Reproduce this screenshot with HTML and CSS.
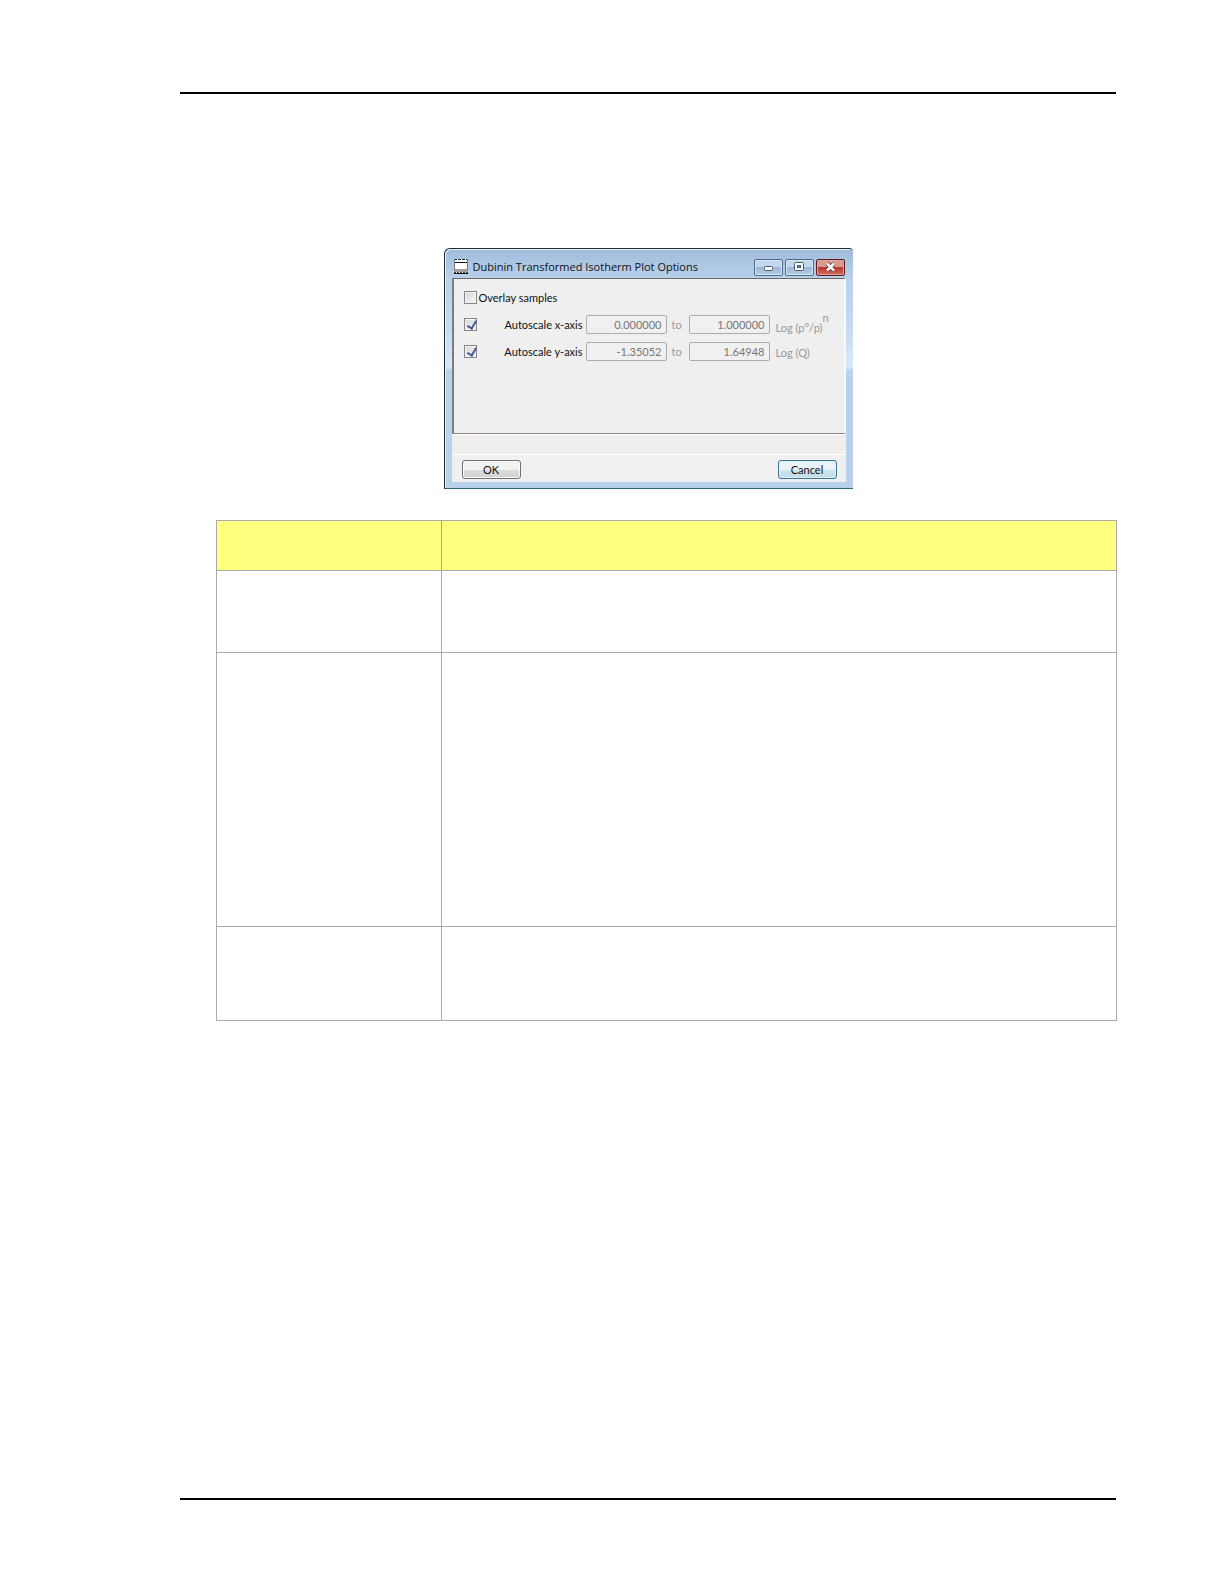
FILE: index.html
```html
<!DOCTYPE html>
<html lang="en">
<head>
    <meta charset="utf-8">
    <title>Dubinin Transformed Isotherm Plot Options</title>
    <link rel="stylesheet" href="styles.css">
</head>
<body>
    <hr class="rule">
    <main>
        <form class="dialog">
            <div class="titlebar">
                <svg class="app-icon" width="14" height="16" viewBox="0 0 14 16">
                    <rect x="0" y="0" width="14" height="15" fill="#fff"/>
                    <path d="M0 0.500h14" stroke="#222" stroke-dasharray="3 1"/>
                    <path d="M0 3.500h14" stroke="#16161e" stroke-width="1"/>
                    <path d="M0 10h14v3H0z" fill="#a39d98"/>
                    <path d="M0 13.500h14" stroke="#444" stroke-dasharray="2 1"/>
                    <path d="M0 14.500h14" stroke="#111"/>
                    <path d="M0.500 0v11M13.500 0v11" stroke="#777"/>
                </svg>
                <h1 class="title">Dubinin Transformed Isotherm Plot Options</h1>
                <button type="button" class="win-btn" aria-label="Minimize">
                    <svg width="11" height="10" viewBox="0 0 11 10"><rect x="1.500" y="4.500" width="8" height="4" rx="1" fill="#fff" stroke="#4d5566"/></svg>
                </button>
                <button type="button" class="win-btn" aria-label="Maximize">
                    <svg width="11" height="10" viewBox="0 0 11 10"><rect x="0.500" y="0.500" width="9" height="8" rx="1" fill="#fff" stroke="#4d5566"/><rect x="3.500" y="3.500" width="3" height="2" fill="#7b93b2" stroke="#4d5566"/></svg>
                </button>
                <button type="button" class="win-btn close" aria-label="Close">
                    <svg width="11" height="10" viewBox="0 0 11 10"><path d="M2 1.500L9 8.500M9 1.500L2 8.500" stroke="#5c3038" stroke-width="4"/><path d="M2 1.500L9 8.500M9 1.500L2 8.500" stroke="#fff" stroke-width="2.500"/></svg>
                </button>
            </div>
            <div class="client">
                <div class="panel">
                    <div class="row">
                        <input type="checkbox" id="overlay">
                        <label for="overlay">Overlay samples</label>
                    </div>
                    <div class="row">
                        <input type="checkbox" id="autoX" checked>
                        <label class="axis" for="autoX">Autoscale x-axis</label>
                        <input type="text" value="0.000000" aria-label="x-axis from" disabled>
                        <span class="to">to</span>
                        <input type="text" value="1.000000" aria-label="x-axis to" disabled>
                        <span class="unit">Log (p°/p)<sup>n</sup></span>
                    </div>
                    <div class="row">
                        <input type="checkbox" id="autoY" checked>
                        <label class="axis" for="autoY">Autoscale y-axis</label>
                        <input type="text" value="-1.35052" aria-label="y-axis from" disabled>
                        <span class="to">to</span>
                        <input type="text" value="1.64948" aria-label="y-axis to" disabled>
                        <span class="unit">Log (Q)</span>
                    </div>
                </div>
                <div class="status"></div>
                <div class="actions">
                    <button type="button" class="btn">OK</button>
                    <button type="button" class="btn cancel">Cancel</button>
                </div>
            </div>
        </form>

        <table class="fields">
            <thead>
                <tr><th></th><th></th></tr>
            </thead>
            <tbody>
                <tr class="short"><td></td><td></td></tr>
                <tr class="tall"><td></td><td></td></tr>
                <tr class="medium"><td></td><td></td></tr>
            </tbody>
        </table>
    </main>
    <hr class="rule bottom">
</body>
</html>
```

FILE: styles.css
```css
* {
    box-sizing: border-box;
}

body {
    margin: 0;
    min-height: 100vh;
    padding: 92px 108px 84px 180px;
    display: flex;
    flex-direction: column;
    background-color: #fff;
    font-family: Lato, "Noto Sans", sans-serif;
    font-size: 11px;
    color: #111;
}

.rule {
    width: 100%;
    height: 2px;
    margin: 0;
    border: none;
    background-color: #000;
}

.rule.bottom {
    margin-top: auto;
}

/* dialog window */
.dialog {
    width: 409px;
    margin: 154px auto 31px;
    padding: 0 7px 6px;
    border: 1px solid #1c2a38;
    border-right: none;
    border-bottom-color: #2b6672;
    border-radius: 6px 4px 0 0;
    background: linear-gradient(#9fbcdc, #b9d1ea 30px, #c6dbf0 80px, #d8e8f6 118px, #b9d1ea 122px);
    box-shadow: inset 1px 1px 0 #e6f1fb;
}

.titlebar {
    display: flex;
    align-items: center;
    height: 29px;
    padding: 7px 1px 0 2px;
}

.title {
    flex: 1;
    margin: 0 0 0 5px;
    font-family: "Open Sans", "Noto Sans", sans-serif;
    font-size: 11px;
    font-weight: normal;
    line-height: 16px;
    white-space: nowrap;
}

.win-btn {
    display: flex;
    align-items: center;
    justify-content: center;
    width: 29px;
    height: 17px;
    margin-left: 2px;
    padding: 0;
    border: 1px solid #526b8c;
    border-radius: 2px;
    background: linear-gradient(#c3d7ec 50%, #9ab6d3 50%, #b7d0e8);
    box-shadow: inset 0 0 0 1px #d6e5f4;
}

.win-btn.close {
    border-color: #5a1a22;
    background: linear-gradient(#dc9a90 50%, #b8382a 50%, #d0705c);
    box-shadow: inset 0 0 0 1px #e0a59c;
}

.client {
    background-color: #f0f0f0;
}

.panel {
    height: 156px;
    padding: 5px 0 0 10px;
    border-top: 1px solid #696969;
    border-left: 2px solid #7c7c7c;
    border-right: 2px solid #fafafa;
    border-bottom: 1px solid #808080;
    background-color: #efefef;
}

.row {
    display: flex;
    align-items: center;
    height: 27px;
    white-space: nowrap;
}

.row > * {
    flex-shrink: 0;
}

.row input[type="checkbox"] {
    appearance: none;
    width: 13px;
    height: 13px;
    margin: 0 2px 0 0;
    border: 1px solid #858585;
    background: linear-gradient(135deg, #d2d5d8, #f8f8f8);
    box-shadow: inset 0 0 0 1px #f6f6f6;
}

.row input[type="checkbox"]:checked::before {
    content: "";
    display: block;
    width: 4px;
    height: 8px;
    margin: 0 0 0 4px;
    border: solid #4658a0;
    border-width: 0 2px 2px 0;
    transform: rotate(30deg);
}

.axis {
    width: 104px;
    margin-right: 3px;
    text-align: right;
}

.row input[type="text"] {
    width: 81px;
    height: 19px;
    margin: 0;
    padding: 0 4px;
    border: 1px solid #adadad;
    border-radius: 2px;
    background-color: #f0f0f0;
    font: inherit;
    color: #777;
    text-align: right;
}

.to {
    width: 22px;
    padding-left: 5px;
    color: #999;
}

.unit {
    padding: 2px 0 0 6px;
    color: #999;
}

.unit sup {
    font-size: 11px;
    line-height: 0;
    vertical-align: 10px;
}

.status {
    height: 21px;
    border-top: 1px solid #fff;
    border-bottom: 1px solid #fff;
    background-color: #f0eeed;
}

.actions {
    display: flex;
    justify-content: space-between;
    padding: 5px 9px 3px 10px;
}

.btn {
    width: 59px;
    height: 19px;
    padding: 0;
    border: 1px solid #707070;
    border-radius: 3px;
    background: linear-gradient(#f2f2f2 50%, #dddddd 50%, #d0d0d0);
    box-shadow: inset 0 0 0 1px #fafafa;
    font: inherit;
    color: #111;
}

.btn.cancel {
    border-color: #3f7590;
    background: linear-gradient(#eaf4f8 50%, #cde4ec 50%, #c2dce6);
    box-shadow: inset 0 0 0 1px #d8f2fa;
}

/* field descriptions */
.fields {
    width: calc(100% - 35px);
    margin-left: 36px;
    border-collapse: collapse;
    table-layout: fixed;
}

.fields th,
.fields td {
    padding: 0;
    border: 1px solid #aaa;
}

.fields th {
    height: 50px;
    background-color: #ffff80;
}

.fields th:first-child {
    width: 225px;
}

.fields .short {
    height: 82px;
}

.fields .tall {
    height: 274px;
}

.fields .medium {
    height: 94px;
}
```
